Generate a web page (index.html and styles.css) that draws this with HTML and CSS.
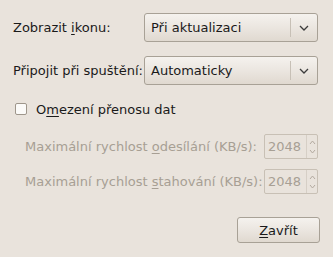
FILE: index.html
```html
<!DOCTYPE html>
<html>
<head>
<meta charset="utf-8">
<link rel="stylesheet" href="styles.css">
</head>
<body>
<div class="dlg">
  <div class="grid">
    <div class="lbl">Zobrazit <u>i</u>konu:</div>
    <div class="combo"><span class="ctext">Při aktualizaci</span><span class="sep"></span><svg class="arrow" width="10" height="6" viewBox="0 0 10 6"><path d="M1 1 L5 5 L9 1" fill="none" stroke="#3c3c3c" stroke-width="1.3"/></svg></div>
    <div class="lbl">Připojit při spuštění:</div>
    <div class="combo"><span class="ctext">Automaticky</span><span class="sep"></span><svg class="arrow" width="10" height="6" viewBox="0 0 10 6"><path d="M1 1 L5 5 L9 1" fill="none" stroke="#3c3c3c" stroke-width="1.3"/></svg></div>
  </div>
  <div class="check"><span class="box"></span><span>O<u>m</u>ezení přenosu dat</span></div>
  <div class="spins">
    <div class="srow"><span class="dis">Maximální rychlost <u>o</u>desílání (KB/s):</span>
      <div class="spin"><span class="sval">2048</span><span class="sbtns"><svg width="7" height="20" viewBox="0 0 7 20"><path d="M1 7 L3.5 4 L6 7" fill="none" stroke="#b3aaa0" stroke-width="1"/><path d="M1 13 L3.5 16 L6 13" fill="none" stroke="#b3aaa0" stroke-width="1"/></svg></span></div>
    </div>
    <div class="srow"><span class="dis">Maximální rychlost <u>s</u>tahování (KB/s):</span>
      <div class="spin"><span class="sval">2048</span><span class="sbtns"><svg width="7" height="20" viewBox="0 0 7 20"><path d="M1 7 L3.5 4 L6 7" fill="none" stroke="#b3aaa0" stroke-width="1"/><path d="M1 13 L3.5 16 L6 13" fill="none" stroke="#b3aaa0" stroke-width="1"/></svg></span></div>
    </div>
  </div>
  <div class="actions"><div class="btn"><u>Z</u>avřít</div></div>
</div>
</body>
</html>
```
FILE: styles.css
```css
html, body {
  margin: 0;
  padding: 0;
  background: #e9e3dc;
  width: 333px;
  height: 257px;
  overflow: hidden;
}
.dlg {
  font-family: "DejaVu Sans", sans-serif;
  font-size: 13px;
  color: #1a1a1a;
  padding: 13px 14px 0 13px;
}
u { text-decoration: underline; text-underline-offset: 2px; }
.grid {
  display: grid;
  grid-template-columns: 131px 1fr;
  row-gap: 14px;
  align-items: center;
}
.combo {
  height: 27px;
  border: 1px solid #a8a196;
  border-radius: 3px;
  background: linear-gradient(#f5f2ee, #ebe6e0 50%, #e0d9d0);
  display: flex;
  align-items: center;
  box-sizing: content-box;
  margin-right: 1px;
}
.ctext { flex: 1; padding-left: 6px; }
.sep {
  width: 1px;
  height: 19px;
  background: #c7c0b6;
}
.arrow { margin: 0 8px 0 8px; }
.check {
  display: flex;
  align-items: center;
  margin-top: 16px;
  padding-left: 2px;
  height: 16px;
}
.box {
  width: 10px;
  height: 10px;
  border: 1px solid #9e968b;
  border-radius: 2px;
  background: #fbfaf8;
  margin-right: 9px;
}
.spins {
  margin-top: 17px;
  padding-left: 12px;
  display: flex;
  flex-direction: column;
  gap: 10px;
}
.srow {
  display: flex;
  align-items: center;
  justify-content: space-between;
}
.dis { color: #a79f94; }
.dis u { text-decoration-color: #a79f94; }
.spin {
  width: 52px;
  height: 23px;
  border: 1px solid #c8c0b5;
  border-radius: 2px;
  display: flex;
  align-items: center;
  margin-right: 1px;
}
.sval { flex: 1; color: #a79f94; padding-left: 3px; }
.sbtns {
  width: 10px;
  height: 23px;
  border-left: 1px solid #d6cfc6;
  display: flex;
  align-items: center;
  justify-content: center;
}
.actions {
  display: flex;
  justify-content: flex-end;
  margin-top: 23px;
}
.btn {
  width: 81px;
  height: 24px;
  border: 1px solid #a8a196;
  border-radius: 3px;
  background: linear-gradient(#f5f2ee, #ebe6e0 50%, #e0d9d0);
  display: flex;
  align-items: center;
  justify-content: center;
  margin-right: -1px;
}
```
